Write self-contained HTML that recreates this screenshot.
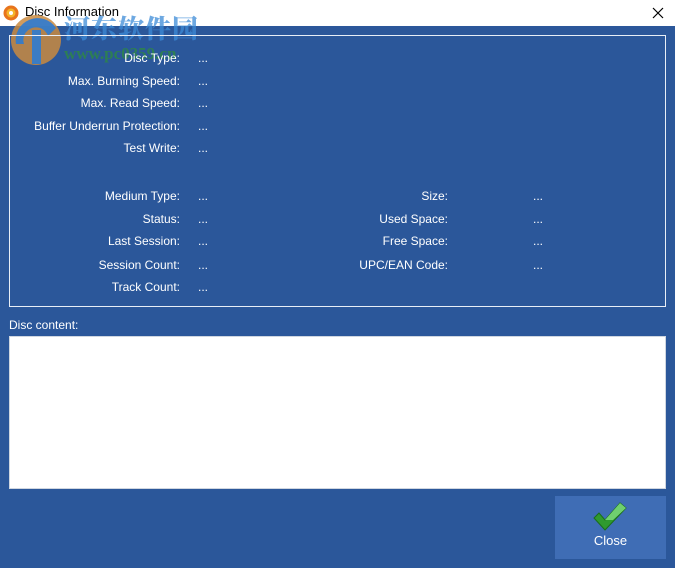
<!DOCTYPE html>
<html><head><meta charset="utf-8"><style>
*{margin:0;padding:0;box-sizing:border-box}
body{width:675px;height:568px;background:#2b579a;position:relative;overflow:hidden;font-family:"Segoe UI","Liberation Sans","DejaVu Sans",sans-serif;font-size:12px;color:#fff}
.title{position:absolute;left:0;top:0;width:675px;height:26px;background:#fff;color:#000;font-size:13px}
.title .t{position:absolute;left:25px;top:4px}
.frame{position:absolute;left:0;top:26px;width:675px;height:542px;border:1px solid #2b579a;border-top:none}
.panel{position:absolute;left:9px;top:35px;width:657px;height:272px;border:1px solid #e8eef7}
.l{position:absolute;text-align:right;width:200px;white-space:nowrap;margin-top:1px}
.v{position:absolute;margin-top:1px}
.content{position:absolute;left:9px;top:336px;width:657px;height:153px;background:#fff;border:1px solid #cfd6e0}
.btn{position:absolute;left:555px;top:496px;width:111px;height:63px;background:#3f6db5}
.btn span{position:absolute;left:0;width:111px;text-align:center;top:37px;font-size:13px}
.wm1{position:absolute;left:64px;top:9px;font-family:"Noto Serif CJK SC",serif;font-weight:900;font-size:26px;color:#3d8bd8;opacity:.75;letter-spacing:1px}
.wm2{position:absolute;left:64px;top:44px;font-family:"Liberation Serif",serif;font-weight:bold;font-size:17px;color:#2e8b3e;opacity:.75}
</style></head><body>
<div class="frame"></div>
<div class="title"><svg style="position:absolute;left:3px;top:5px" width="16" height="16"><circle cx="8" cy="8" r="7.5" fill="#e8741c"/><circle cx="8" cy="8" r="4.5" fill="#f5b52a"/><circle cx="8" cy="8" r="2" fill="#fff"/></svg><span class="t">Disc Information</span><svg style="position:absolute;left:652px;top:7px" width="12" height="12"><path d="M1 1L11 11M11 1L1 11" stroke="#000" stroke-width="1.2"/></svg></div>
<svg style="position:absolute;left:8px;top:14px" width="56" height="52"><circle cx="28" cy="26" r="25" fill="#c98a3f" opacity=".85"/><path d="M8 30 A22 22 0 0 1 48 14 L40 22 A12 12 0 0 0 16 30Z" fill="#2f7bd0" opacity=".9"/><rect x="24" y="16" width="9" height="34" fill="#2f7bd0" opacity=".9"/></svg>
<div class="wm1">河东软件园</div>
<div class="wm2">www.pc0359.cn</div>
<div class="panel"></div>
<div class="l" style="left:-20px;top:50px">Disc Type:</div><div class="v" style="left:198px;top:50px">...</div>
<div class="l" style="left:-20px;top:73px">Max. Burning Speed:</div><div class="v" style="left:198px;top:73px">...</div>
<div class="l" style="left:-20px;top:95px">Max. Read Speed:</div><div class="v" style="left:198px;top:95px">...</div>
<div class="l" style="left:-20px;top:118px">Buffer Underrun Protection:</div><div class="v" style="left:198px;top:118px">...</div>
<div class="l" style="left:-20px;top:140px">Test Write:</div><div class="v" style="left:198px;top:140px">...</div>
<div class="l" style="left:-20px;top:188px">Medium Type:</div><div class="v" style="left:198px;top:188px">...</div>
<div class="l" style="left:-20px;top:211px">Status:</div><div class="v" style="left:198px;top:211px">...</div>
<div class="l" style="left:-20px;top:233px">Last Session:</div><div class="v" style="left:198px;top:233px">...</div>
<div class="l" style="left:-20px;top:257px">Session Count:</div><div class="v" style="left:198px;top:257px">...</div>
<div class="l" style="left:-20px;top:279px">Track Count:</div><div class="v" style="left:198px;top:279px">...</div>
<div class="l" style="left:248px;top:188px">Size:</div><div class="v" style="left:533px;top:188px">...</div>
<div class="l" style="left:248px;top:211px">Used Space:</div><div class="v" style="left:533px;top:211px">...</div>
<div class="l" style="left:248px;top:233px">Free Space:</div><div class="v" style="left:533px;top:233px">...</div>
<div class="l" style="left:248px;top:257px">UPC/EAN Code:</div><div class="v" style="left:533px;top:257px">...</div>
<div class="v" style="left:9px;top:317px">Disc content:</div>
<div class="content"></div>
<div class="btn"><svg style="position:absolute;left:38px;top:6px" width="34" height="30"><path d="M1 16 L12 28 L33 6 L27 1 L12 18 L6 11Z" fill="#2f9a2f" stroke="#1a6e1a" stroke-width="1"/><path d="M12 18 L27 1 L33 6 L20 18Z" fill="#6fd06f"/></svg><span>Close</span></div>
</body></html>
